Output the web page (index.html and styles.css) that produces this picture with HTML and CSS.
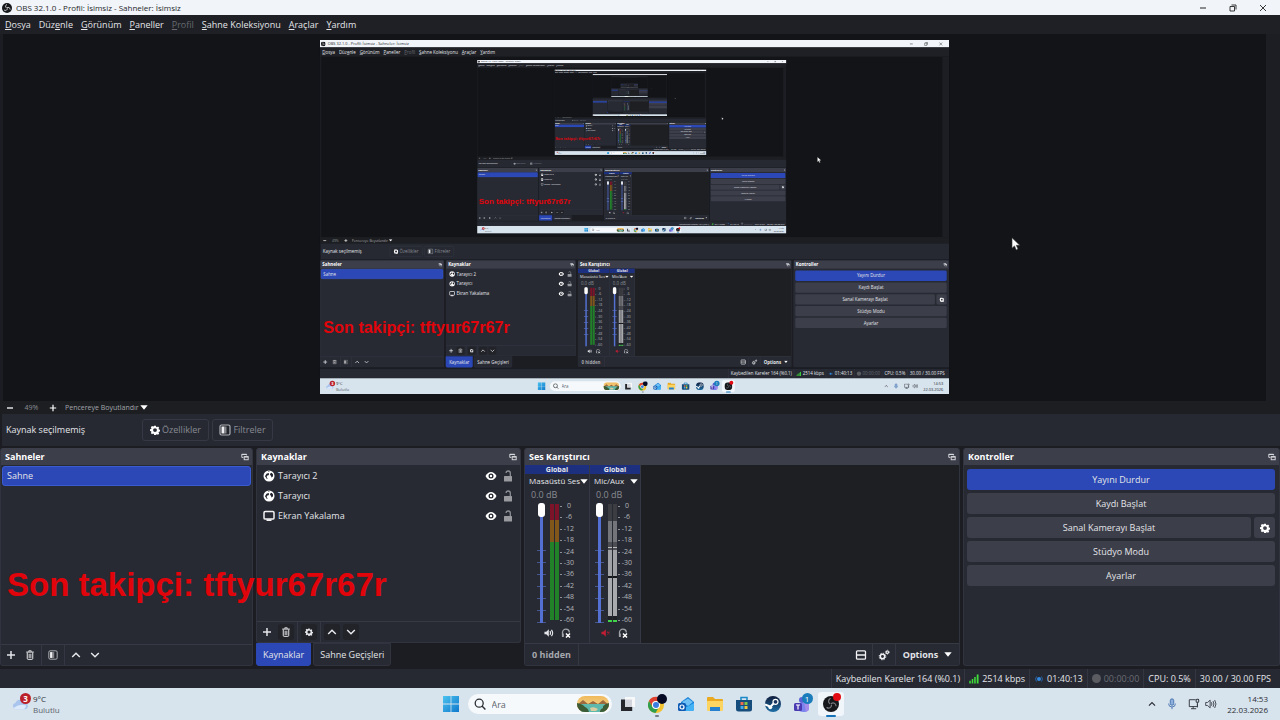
FILE: index.html
```html
<!DOCTYPE html>
<html lang="tr">
<head>
<meta charset="utf-8">
<title>OBS 32.1.0</title>
<link rel="stylesheet" href="styles.css">
</head>
<body>
<svg class="sprite" aria-hidden="true">
  <defs>
    <linearGradient id="g-win" x1="0" y1="0" x2="1" y2="1"><stop offset="0" stop-color="#4cc3f0"/><stop offset="1" stop-color="#0f78cc"/></linearGradient>
    <linearGradient id="g-sky" x1="0" y1="0" x2="0" y2="1"><stop offset="0" stop-color="#f0b95a"/><stop offset="1" stop-color="#f7dfa0"/></linearGradient>
    <linearGradient id="g-steam" x1="0" y1="0" x2="0" y2="1"><stop offset="0" stop-color="#101d3c"/><stop offset="1" stop-color="#1d6ea5"/></linearGradient>
    <clipPath id="c-pill"><rect width="32" height="16" rx="8"/></clipPath>
  </defs>
  <symbol id="i-obs" viewBox="0 0 16 16"><circle cx="8" cy="8" r="8" fill="#16171a"/><g fill="none" stroke="#d8dade" stroke-width="1.5" stroke-linecap="round"><path d="M7.2 2.6c-2 1.2-2.2 3.8-.4 5"/><path d="M13 9.8c-.2-2.4-2.6-3.6-4.6-2.4"/><path d="M4 11.6c2.1 1.1 4.400-.1 4.500-2.400"/></g></symbol>
  <symbol id="i-obs-dim" viewBox="0 0 16 16"><circle cx="8" cy="8" r="8" fill="#16171a"/><g fill="none" stroke="#777a80" stroke-width="1.200" stroke-linecap="round"><path d="M7.2 2.6c-2 1.2-2.2 3.8-.4 5"/><path d="M13 9.8c-.2-2.4-2.6-3.6-4.6-2.4"/><path d="M4 11.6c2.1 1.1 4.400-.1 4.500-2.400"/></g></symbol>
  <symbol id="i-popout" viewBox="0 0 10 10"><g fill="none" stroke="#d6d7dc" stroke-width="1.200"><path d="M3 5.500H1V1.600h6V3"/><rect x="4" y="4.600" width="5" height="3.800"/></g><path d="M1 1.200h6v1.300H1zM4 4h5v1.500H4z" fill="#d6d7dc"/></symbol>
  <symbol id="i-gear" viewBox="0 0 16 16"><path fill="currentColor" fill-rule="evenodd" d="M6.600 1h2.800l.4 1.900 1.300.6 1.700-1 1.900 1.900-1 1.700.5 1.200 1.900.5v2.600l-1.900.4-.5 1.300 1 1.700-1.900 1.900-1.700-1-1.300.5L9.400 16H6.600l-.4-1.800-1.300-.5-1.700 1-1.900-1.900 1-1.700-.5-1.300L0 9.400V6.800l1.800-.5.5-1.200-1-1.700 1.900-1.900 1.700 1 1.300-.6zM8 5a3 3 0 1 0 0 6.200A3 3 0 0 0 8 5z"/></symbol>
  <symbol id="i-filter" viewBox="0 0 12 12"><rect x="1" y="1" width="10" height="10" rx="1.500" fill="#24262d" stroke="#aeb0b6" stroke-width="1.200"/><rect x="2.500" y="2.500" width="3" height="7" fill="#f0f0f2"/><rect x="5.500" y="2.500" width="2" height="7" fill="#85878e"/></symbol>
  <symbol id="i-globe" viewBox="0 0 12 12"><circle cx="6" cy="6" r="5.500" fill="#fff"/><path d="M2 6.200l1.500-2.500 2-.8.700 1-.7 1.400-1.600.4-.2 1.500 1 1.300-.8.600zM7.200 3.600l1.600-.9 1.400 2-.5 2-1.300.7-.4-1.600-1-.7zM5 1.300l1.600-.2-.6.900z" fill="#23252e"/></symbol>
  <symbol id="i-screen" viewBox="0 0 12 12"><rect x="1" y="1.500" width="10" height="7.600" rx="1.200" fill="none" stroke="#f2f2f4" stroke-width="1.500"/><path d="M3.500 9.300h5v1.700h-5z" fill="#f2f2f4"/></symbol>
  <symbol id="i-eye" viewBox="0 0 12 10"><path d="M0.500 5C2 2 4 .9 6 .9S10 2 11.500 5C10 8 8 9.100 6 9.100S2 8 .5 5z" fill="#fff"/><circle cx="6" cy="5" r="2.500" fill="#23252e"/><circle cx="6" cy="5" r="1.200" fill="#fff"/></symbol>
  <symbol id="i-lock" viewBox="0 0 10 12"><rect x="1" y="6" width="8" height="5.500" rx=".6" fill="#989a9f"/><path d="M7.300 6V3.200a2.100 2.100 0 0 0-4.200-.2" fill="none" stroke="#8c8e94" stroke-width="1.300"/></symbol>
  <symbol id="i-plus" viewBox="0 0 10 10"><path d="M5 1v8M1 5h8" stroke="currentColor" stroke-width="1.500"/></symbol>
  <symbol id="i-minus" viewBox="0 0 10 10"><path d="M2 5h6" stroke="currentColor" stroke-width="1.300"/></symbol>
  <symbol id="i-trash" viewBox="0 0 10 12"><path d="M.5 2.500h9M3.500 2V1h3v1M1.700 3v7.200q0 1 1 1h4.600q1 0 1-1V3" fill="none" stroke="#e8e8ea" stroke-width="1.200"/><path d="M3.200 4.500h3.600v5H3.200z" fill="#9a9ba0"/></symbol>
  <symbol id="i-up" viewBox="0 0 10 10"><path d="M1.200 7L5 3.200 8.800 7" fill="none" stroke="currentColor" stroke-width="1.500"/></symbol>
  <symbol id="i-down" viewBox="0 0 10 10"><path d="M1.200 3L5 6.800 8.800 3" fill="none" stroke="currentColor" stroke-width="1.500"/></symbol>
  <symbol id="i-caret" viewBox="0 0 8 5"><path d="M.3.300h7.400L4 4.800z" fill="#fff"/></symbol>
  <symbol id="i-speaker" viewBox="0 0 11 10"><path d="M.5 3.500h2L5.300 1v8L2.500 6.500h-2z" fill="currentColor"/><path d="M6.500 3q1.300 2 0 4M8.200 1.500q2.600 3.500 0 7" fill="none" stroke="currentColor" stroke-width="1.300"/></symbol>
  <symbol id="i-muted" viewBox="0 0 11 10"><path d="M.5 3.500h2L5.300 1v8L2.500 6.500h-2z" fill="currentColor"/><path d="M6.500 3.500l3 3M9.500 3.500l-3 3" stroke="currentColor" stroke-width="1.200" opacity=".7"/></symbol>
  <symbol id="i-phones" viewBox="0 0 10 10"><path d="M1.500 8.500V4.500a3.400 3.400 0 0 1 6.800 0" fill="none" stroke="#a2a3a8" stroke-width="1.300"/><path d="M1 5.500h1.800v3.500H1z" fill="#a2a3a8"/><path d="M5 5.500l4 4M9 5.500l-4 4" stroke="#fff" stroke-width="1.500"/></symbol>
  <symbol id="i-layout" viewBox="0 0 12 10"><rect x="1.500" y=".8" width="9" height="8.400" rx="1" fill="none" stroke="#f2f2f4" stroke-width="1.300"/><path d="M1.500 5h9" stroke="#f2f2f4" stroke-width="1.300"/></symbol>
  <symbol id="i-gears" viewBox="0 0 12 12"><g fill="none" stroke="#f2f2f4"><circle cx="4.500" cy="7.500" r="2.200" stroke-width="1.500"/><circle cx="4.500" cy="7.500" r="3.300" stroke-width="1" stroke-dasharray="1.300 1.292"/><circle cx="9.300" cy="3.200" r="1.200" stroke-width="1.200"/><circle cx="9.300" cy="3.200" r="2" stroke-width=".7" stroke-dasharray="1.050 1.044"/></g></symbol>
  <symbol id="i-bars" viewBox="0 0 11 10"><path d="M.3 7h1.700v3H.3zM3 5h1.700v5H3zM5.700 2.800h1.700V10H5.700zM8.500 0h2v10h-2z" fill="#3fdc3a"/></symbol>
  <symbol id="i-live" viewBox="0 0 12 10"><circle cx="6" cy="5" r="2.400" fill="#3388e0"/><path d="M3 2Q.8 5 3 8M9 2q2.200 3 0 6" fill="none" stroke="#2763a8" stroke-width="1.200"/></symbol>
  <symbol id="i-cloud" viewBox="0 0 18 12"><path d="M4 11.500a3.300 3.300 0 0 1-.4-6.500A5 5 0 0 1 13 4.600a3.500 3.500 0 0 1 1 6.900z" fill="#a9c5ee"/><path d="M2 10q6-5 13-2.500-1 4-3 4H4q-2 0-2-1.500z" fill="#dbe9fb"/></symbol>
  <symbol id="i-windows" viewBox="0 0 16 16"><path d="M0 0h7.600v7.600H0zM8.400 0H16v7.600H8.400zM0 8.400h7.600V16H0zM8.400 8.400H16V16H8.400z" fill="url(#g-win)"/></symbol>
  <symbol id="i-search" viewBox="0 0 12 12"><circle cx="5.200" cy="5.200" r="4" fill="none" stroke="#2a2d33" stroke-width="1.300"/><path d="M8 8l3.400 3.400" stroke="#2a2d33" stroke-width="1.400"/></symbol>
  <symbol id="i-scene" viewBox="0 0 32 16"><g clip-path="url(#c-pill)"><path d="M0 0h32v16H0z" fill="url(#g-sky)"/><path d="M0 9l6-5 5 4 5-3 5 3 5-4 6 5v7H0z" fill="#9c6a3e"/><path d="M4 8h24v8H4z" fill="#5fb8ac"/><path d="M0 7q6 1 8 4 3 1 4 5H0zM32 7q-7 2-6 5-3 1-3 4h9z" fill="#3c5c35"/><path d="M13 12q4-2 8 1l-2 2h-5z" fill="#d8cda0"/></g></symbol>
  <symbol id="i-task" viewBox="0 0 16 16"><path d="M5 1h10v10H5z" fill="#f7f8fa"/><path d="M1 3.500h4v7.300h7.200V15H1z" fill="#24262a"/><path d="M5 3.500h7v7.300H5z" fill="#d2d6dc"/></symbol>
  <symbol id="i-chrome" viewBox="0 0 20 20"><circle cx="9" cy="11" r="8" fill="#f2c230"/><path d="M2 7a8 8 0 0 1 14 0H9a4 4 0 0 0-3.500 6z" fill="#df4133"/><path d="M2 7a8 8 0 0 0 6.500 12l3.600-6.200A4 4 0 0 1 5.500 13z" fill="#2f9d4e"/><circle cx="9" cy="11" r="4" fill="#fff"/><circle cx="9" cy="11" r="3" fill="#3b7de0"/><circle cx="15" cy="5" r="5" fill="#060a24"/></symbol>
  <symbol id="i-outlook" viewBox="0 0 16 16"><path d="M3 6l7-5 6 5v7q0 2-2 2H5q-2 0-2-2z" fill="#1680d8"/><path d="M4 6l6-3.500L15 6l-5 4z" fill="#6fc0f5"/><path d="M3 14l13-7v6q0 2-2 2H5z" fill="#43b2f4"/><rect y="7" width="8" height="8" rx="1.500" fill="#105cb4"/><circle cx="4" cy="11" r="2" fill="none" stroke="#fff" stroke-width="1.200"/></symbol>
  <symbol id="i-folder" viewBox="0 0 16 16"><path d="M0 2q0-1 1-1h5l2 2h7q1 0 1 1v10H0z" fill="#e9a920"/><path d="M0 5h16v9q0 1-1 1H1q-1 0-1-1z" fill="#fcd462"/><path d="M3 11h10v4H3z" fill="#2581ce"/></symbol>
  <symbol id="i-store" viewBox="0 0 16 16"><path d="M5 4V1.500h6V4" fill="none" stroke="#1989c7" stroke-width="1.500"/><path d="M0 4h16v9q0 2.500-2.500 2.500h-11Q0 15.500 0 13z" fill="#154d7d"/><path d="M4.500 6h3v3h-3z" fill="#ed6b4e"/><path d="M8.500 6h3v3h-3z" fill="#80c44a"/><path d="M4.500 10h3v3h-3z" fill="#43abe8"/><path d="M8.500 10h3v3h-3z" fill="#f2c83e"/></symbol>
  <symbol id="i-steam" viewBox="0 0 16 16"><circle cx="8" cy="8" r="8" fill="url(#g-steam)"/><path d="M0 8.500l5.500 2.200L9 7" fill="none" stroke="#fff" stroke-width="2"/><circle cx="10.500" cy="5.800" r="2.500" fill="#17345c" stroke="#fff" stroke-width="1.200"/><circle cx="5.300" cy="11.300" r="1.900" fill="#fff"/></symbol>
  <symbol id="i-teams" viewBox="0 0 16 16"><circle cx="8" cy="4" r="3" fill="#5b62d6"/><path d="M3 7h12v5q0 4-5 4-6 0-7-4z" fill="#7b83ee"/><path d="M10 7h5v5q0 3-3 3.500z" fill="#a58bea"/><rect y="7" width="8" height="8" rx="1.500" fill="#4a3bb2"/><path d="M2 9h4M4 9v4.500" stroke="#fff" stroke-width="1.200"/></symbol>
  <symbol id="i-mic" viewBox="0 0 10 14"><rect x="3" y="1" width="4" height="7.500" rx="2" fill="#8eb0dc" stroke="#3f6cab"/><path d="M1 6.500q0 4 4 4t4-4M5 10.500V13" fill="none" stroke="#3f6cab"/></symbol>
  <symbol id="i-net" viewBox="0 0 14 14"><path d="M9 2H1.500v8h9.500V6.500M3.500 12.500h6M6 10v2.500" fill="none" stroke="#33373f" stroke-width="1.100"/><rect x="9.500" y="1.500" width="3" height="3.500" rx="1" fill="none" stroke="#33373f" stroke-width="1.200"/><path d="M11 5v6" stroke="#33373f"/></symbol>
  <symbol id="i-sound" viewBox="0 0 14 12"><path d="M.8 4.200H3L6 1.500v9L3 7.800H.8z" fill="none" stroke="#33373f"/><path d="M7.500 4q1.200 2 0 4M9.400 2.600q2 3.400 0 6.800M11.300 1.300q3 4.700 0 9.400" fill="none" stroke="#33373f"/></symbol>
  <symbol id="i-cursor" viewBox="0 0 10 14"><path d="M1 .800v10.400l2.500-2.300 1.700 4 1.800-.8-1.700-3.800h3.500z" fill="#fff" stroke="#333" stroke-width=".6"/></symbol>
</svg>

<div class="desktop">
  <header class="titlebar">
    <svg class="s10"><use href="#i-obs"/></svg>
    <span class="title">OBS 32.1.0 - Profil: İsimsiz - Sahneler: İsimsiz</span>
    <button class="winbtn" aria-label="Simge durumuna küçült"><svg class="s8" viewBox="0 0 8 8"><path d="M1 4h6" stroke="#222"/></svg></button>
    <button class="winbtn" aria-label="Önceki boyut"><svg class="s8" viewBox="0 0 8 8"><path d="M1 2.500h4.500V7H1zM2.500 1H7v4.500" fill="none" stroke="#222" stroke-width=".9"/></svg></button>
    <button class="winbtn" aria-label="Kapat"><svg class="s8" viewBox="0 0 8 8"><path d="M1 1l6 6M7 1L1 7" stroke="#222" stroke-width=".9"/></svg></button>
  </header>

  <nav class="menubar">
    <button><u>D</u>osya</button><button>Düz<u>e</u>nle</button><button><u>G</u>örünüm</button><button><u>P</u>aneller</button><button disabled><u>P</u>rofil</button><button><u>S</u>ahne Koleksiyonu</button><button><u>A</u>raçlar</button><button><u>Y</u>ardım</button>
  </nav>

  <main class="stage">
    <svg class="capture" viewBox="0 0 1280 720" role="img" aria-label="Önizleme"></svg>
  </main>

  <div class="zoombar">
    <button aria-label="Uzaklaştır"><svg class="s10"><use href="#i-minus"/></svg></button>
    <span class="percent">49%</span>
    <button aria-label="Yakınlaştır"><svg class="s8"><use href="#i-plus"/></svg></button>
    <div class="fit"><select aria-label="Önizleme ölçeği"><option>Pencereye Boyutlandır</option></select><svg class="caret"><use href="#i-caret"/></svg></div>
  </div>

  <div class="context">
    <span class="context-label">Kaynak seçilmemiş</span>
    <button class="ghost" disabled><svg class="s10"><use href="#i-gear"/></svg>Özellikler</button>
    <button class="ghost" disabled><svg class="s12"><use href="#i-filter"/></svg>Filtreler</button>
  </div>

  <div class="docks">
    <section class="dock">
      <h2>Sahneler<button aria-label="Paneli ayır"><svg class="s8"><use href="#i-popout"/></svg></button></h2>
      <ul class="scenes"><li>Sahne</li></ul>
      <div class="tools">
        <button aria-label="Ekle"><svg class="s10"><use href="#i-plus"/></svg></button>
        <button aria-label="Sil"><svg class="s10"><use href="#i-trash"/></svg></button>
        <i class="rule"></i>
        <button aria-label="Filtreler"><svg class="s10"><use href="#i-filter"/></svg></button>
        <i class="rule"></i>
        <button aria-label="Yukarı"><svg class="s10"><use href="#i-up"/></svg></button>
        <button aria-label="Aşağı"><svg class="s10"><use href="#i-down"/></svg></button>
      </div>
    </section>

    <div class="stack">
      <section class="dock">
        <h2>Kaynaklar<button aria-label="Paneli ayır"><svg class="s8"><use href="#i-popout"/></svg></button></h2>
        <ul class="sources">
          <li><svg class="s12"><use href="#i-globe"/></svg><span>Tarayıcı 2</span><button aria-label="Görünürlük"><svg class="s12"><use href="#i-eye"/></svg></button><button aria-label="Kilit"><svg class="s12"><use href="#i-lock"/></svg></button></li>
          <li><svg class="s12"><use href="#i-globe"/></svg><span>Tarayıcı</span><button aria-label="Görünürlük"><svg class="s12"><use href="#i-eye"/></svg></button><button aria-label="Kilit"><svg class="s12"><use href="#i-lock"/></svg></button></li>
          <li><svg class="s12"><use href="#i-screen"/></svg><span>Ekran Yakalama</span><button aria-label="Görünürlük"><svg class="s12"><use href="#i-eye"/></svg></button><button aria-label="Kilit"><svg class="s12"><use href="#i-lock"/></svg></button></li>
        </ul>
        <div class="tools">
          <button aria-label="Ekle"><svg class="s10"><use href="#i-plus"/></svg></button>
          <button class="sunk" aria-label="Sil"><svg class="s10"><use href="#i-trash"/></svg></button>
          <i class="rule"></i>
          <button class="sunk" aria-label="Özellikler"><svg class="s8"><use href="#i-gear"/></svg></button>
          <i class="rule"></i>
          <button class="sunk" aria-label="Yukarı"><svg class="s10"><use href="#i-up"/></svg></button>
          <button class="sunk" aria-label="Aşağı"><svg class="s10"><use href="#i-down"/></svg></button>
        </div>
      </section>
      <div class="tabs"><button class="active">Kaynaklar</button><button>Sahne Geçişleri</button></div>
    </div>

    <section class="dock mixer">
      <h2>Ses Karıştırıcı<button aria-label="Paneli ayır"><svg class="s8"><use href="#i-popout"/></svg></button></h2>
      <div class="strips">
        <div class="strip wide">
          <div class="tag">Global</div>
          <button class="channel">Masaüstü Ses<svg class="caret"><use href="#i-caret"/></svg></button>
          <div class="level">0.0 dB</div>
          <div class="fader">
            <input type="range" min="0" max="100" value="100" aria-label="Masaüstü Ses düzeyi">
            <div class="meter colour"><i></i><i></i></div>
            <ol><li>0</li><li>-6</li><li>-12</li><li>-18</li><li>-24</li><li>-30</li><li>-36</li><li>-42</li><li>-48</li><li>-54</li><li>-60</li></ol>
          </div>
          <div class="switches"><button aria-label="Sustur"><svg class="s10"><use href="#i-speaker"/></svg></button><button aria-label="Dinle"><svg class="s10"><use href="#i-phones"/></svg></button></div>
        </div>
        <div class="strip">
          <div class="tag">Global</div>
          <button class="channel">Mic/Aux<svg class="caret"><use href="#i-caret"/></svg></button>
          <div class="level">0.0 dB</div>
          <div class="fader">
            <input type="range" min="0" max="100" value="100" aria-label="Mic/Aux düzeyi">
            <div class="meter grey"><i></i><i></i></div>
            <ol><li>0</li><li>-6</li><li>-12</li><li>-18</li><li>-24</li><li>-30</li><li>-36</li><li>-42</li><li>-48</li><li>-54</li><li>-60</li></ol>
          </div>
          <div class="switches"><button class="muted" aria-label="Sesi aç"><svg class="s10"><use href="#i-muted"/></svg></button><button aria-label="Dinle"><svg class="s10"><use href="#i-phones"/></svg></button></div>
        </div>
      </div>
      <div class="mixer-foot">
        <span class="hidden-count">0 hidden</span>
        <button aria-label="Düzen"><svg class="s12"><use href="#i-layout"/></svg></button>
        <button aria-label="Gelişmiş ses"><svg class="s12"><use href="#i-gears"/></svg></button>
        <button class="options">Options<svg class="caret"><use href="#i-caret"/></svg></button>
      </div>
    </section>

    <section class="dock">
      <h2>Kontroller<button aria-label="Paneli ayır"><svg class="s8"><use href="#i-popout"/></svg></button></h2>
      <div class="controls">
        <button class="active">Yayını Durdur</button>
        <button>Kaydı Başlat</button>
        <div class="pair"><button>Sanal Kamerayı Başlat</button><button aria-label="Sanal kamera ayarları"><svg class="s10"><use href="#i-gear"/></svg></button></div>
        <button>Stüdyo Modu</button>
        <button>Ayarlar</button>
      </div>
    </section>
  </div>

  <footer class="status">
    <span>Kaybedilen Kareler 164 (%0.1)</span>
    <span><svg class="s10"><use href="#i-bars"/></svg>2514 kbps</span>
    <span><svg class="s10"><use href="#i-live"/></svg>01:40:13</span>
    <span class="off"><i class="dot"></i>00:00:00</span>
    <span>CPU: 0.5%</span>
    <span>30.00 / 30.00 FPS</span>
  </footer>

  <div class="taskbar">
    <div class="weather"><div class="cloud"><svg><use href="#i-cloud"/></svg><b>3</b></div><div><div>9°C</div><div class="soft">Bulutlu</div></div></div>
    <div class="apps">
      <button class="start" aria-label="Başlat"><svg class="s16"><use href="#i-windows"/></svg></button>
      <label class="search"><svg class="s12"><use href="#i-search"/></svg><input type="text" placeholder="Ara" aria-label="Ara"><svg class="scene"><use href="#i-scene"/></svg></label>
      <button class="app" aria-label="Görev görünümü"><svg class="s16"><use href="#i-task"/></svg></button>
      <button class="app open" aria-label="Chrome"><svg class="s20"><use href="#i-chrome"/></svg></button>
      <button class="app" aria-label="Outlook"><svg class="s16"><use href="#i-outlook"/></svg></button>
      <button class="app" aria-label="Dosya Gezgini"><svg class="s16"><use href="#i-folder"/></svg></button>
      <button class="app" aria-label="Store"><svg class="s16"><use href="#i-store"/></svg></button>
      <button class="app" aria-label="Steam"><svg class="s16"><use href="#i-steam"/></svg></button>
      <button class="app" aria-label="Teams"><svg class="s16"><use href="#i-teams"/></svg><b class="badge">1</b></button>
      <button class="app open current" aria-label="OBS"><svg class="s16"><use href="#i-obs-dim"/></svg><b class="badge rec"></b></button>
    </div>
    <div class="tray">
      <svg class="s8"><use href="#i-up"/></svg>
      <svg class="s12"><use href="#i-mic"/></svg>
      <div class="net"><svg class="s12"><use href="#i-net"/></svg><svg class="s12"><use href="#i-sound"/></svg></div>
      <div class="clock"><div>14:53</div><div>22.03.2026</div></div>
    </div>
  </div>

  <div class="overlay">Son takipçi: tftyur67r67r</div>
  <svg class="cursor"><use href="#i-cursor"/></svg>
</div>
<script src="script.js"></script>
</body>
</html>
```
FILE: styles.css
```css
* { box-sizing: border-box; }
html, body { height: 100%; margin: 0; }
body { background: #1b1d23; }
button, input, select { font: inherit; color: inherit; border: 0; background: none; padding: 0; margin: 0; }
ul, ol { list-style: none; margin: 0; padding: 0; }
svg { display: block; flex: none; }
.sprite { position: absolute; width: 0; height: 0; }
.s8 { width: 8px; height: 8px; }
.s10 { width: 10px; height: 10px; }
.s12 { width: 12px; height: 12px; }
.s16 { width: 16px; height: 16px; }
.s20 { width: 20px; height: 20px; }
.caret { width: 8px; height: 5px; }

.desktop {
  position: relative;
  display: flex;
  flex-direction: column;
  height: 100%;
  overflow: hidden;
  background: #1b1d23;
  color: #e4e5e9;
  font: 9px/14px "Open Sans", "Noto Sans", sans-serif;
}

.titlebar { display: flex; align-items: center; height: 15px; padding: 0 2px; background: #f1f5f9; color: #25272b; font-size: 8px; }
.title { flex: 1; margin-left: 4px; }
.winbtn { display: grid; place-items: center; width: 30px; height: 15px; }

.menubar { display: flex; gap: 8px; height: 19px; padding: 0 5px; background: #1e2025; align-items: center; }
.menubar button:disabled { color: #686a70; }
.menubar u { text-underline-offset: 1px; }

.stage { flex: 1; min-height: 0; margin-left: 3px; padding: 6px 0 7px; background: #131418; border-right: 14px solid #1d1e23; }
.capture { width: 100%; height: 100%; }

.zoombar { display: flex; align-items: center; height: 13px; padding-left: 4px; background: #1c1e22; font-size: 7px; color: #fff; }
.zoombar button { display: grid; place-items: center; width: 12px; }
.percent { width: 31px; text-align: center; color: #8b8d92; }
.fit { display: flex; align-items: center; margin-left: 6px; }
.fit select { appearance: none; width: 75px; color: #a2a4a9; line-height: 12px; }

.context { display: flex; align-items: center; height: 32px; margin: 0 0 2px 2px; padding-left: 4px; background: #262932; }
.context-label { width: 136px; }
.ghost { display: flex; align-items: center; justify-content: center; gap: 2px; height: 22px; width: 67px; border: 1px solid #363943; border-radius: 3px; color: #888a92; }
.ghost + .ghost { width: 61px; margin-left: 3px; }
.ghost svg { color: #fff; }

.docks { display: grid; grid-template-columns: 253fr 265fr 436fr 317fr; column-gap: 3px; height: 218px; }
.dock { display: flex; flex-direction: column; min-width: 0; min-height: 0; flex: 1; background: #272a33; border: 1px solid #31343e; border-top: 0; border-radius: 3px; overflow: hidden; }
.stack { display: flex; flex-direction: column; min-width: 0; }
h2 { display: flex; justify-content: space-between; align-items: center; flex: none; height: 17px; margin: 0; padding: 0 3px 0 4px; background: #3c3e4a; color: #fff; font-size: 9px; font-weight: 700; }
h2 button { display: block; }
.scenes { flex: 1; padding: 1px; }
.scenes li { height: 20px; padding: 2px 4px; background: #2b48b6; border: 1px solid #3b5bd0; border-radius: 3px; line-height: 14px; }
.sources { flex: 1; padding: 1px 6px 0; }
.sources li { display: flex; align-items: center; height: 20px; }
.sources span { flex: 1; margin-left: 3px; }
.sources button + button { margin: 0 0 0 5px; }
.tools { display: flex; align-items: center; gap: 3px; height: 21px; padding-left: 2px; border-top: 1px solid #373a45; }
.tools button { display: grid; place-items: center; width: 16px; height: 16px; border-radius: 3px; }
.tools .sunk { background: #212329; }
.rule { width: 1px; height: 20px; background: #353843; }
.tabs { display: flex; gap: 2px; height: 23px; flex: none; }
.tabs button { padding: 0 6px; background: #272a33; border: 1px solid #31343e; border-radius: 0 0 3px 3px; }
.tabs .active { background: #2b48b6; border-color: #2b48b6; }

.mixer { background: #1e1f22; }
.strips { display: flex; flex: 1; min-height: 0; }
.strip { display: flex; flex-direction: column; width: 51px; background: #272a33; border-right: 1px solid #363945; }
.strip.wide { width: 65px; }
.tag { height: 9px; background: #1d3080; font-size: 7px; font-weight: 700; line-height: 9px; text-align: center; }
.channel { display: flex; align-items: center; justify-content: space-between; height: 14px; padding: 0 2px 0 4px; font-size: 8px; white-space: nowrap; }
.level { height: 14px; padding-left: 6px; color: #898b92; line-height: 14px; }
.fader { display: flex; height: 122px; padding: 1px 0 1px 5px; }
.wide .fader { padding-left: 12px; }
.fader input { appearance: none; writing-mode: vertical-lr; direction: rtl; width: 9px; height: 120px; background: repeating-linear-gradient(#0000 0 11px, #46578f 11px 12px) 0 36px / 9px 84px no-repeat; }
.fader input::-webkit-slider-runnable-track { width: 3px; height: 120px; margin: 0 3px; background: #5470d2; }
.fader input::-webkit-slider-thumb { appearance: none; width: 7px; height: 14px; margin-left: -2px; background: #fff; border-radius: 3px; }
.meter { display: flex; gap: 1px; width: 9px; height: 116px; margin: 1px 2px 0 4px; }
.meter i { flex: 1; }
.colour i { background: linear-gradient(#7c1328 0 16px, #80561a 16px 38px, #218129 38px); }
.grey i { background: linear-gradient(#3c3d42 0 17px, #74757a 17px 38px, #4d4e54 38px 43px, #bbb 43px 44px, #4d4e54 44px 46px, #a0a1a5 46px 72px, #15161a 72px 74px, #a9aaad 74px 112px, #1f2126 112px); }
.grey i { height: 118px; border-bottom: 2px solid #41d44a; }
.fader ol { display: flex; flex-direction: column; justify-content: space-between; height: 122px; width: 16px; margin-top: -1px; color: #b3b4b8; font-size: 7px; line-height: 8px; text-align: center; }
.fader ol li { position: relative; }
.fader ol li::before { content: ""; position: absolute; left: -1px; top: 4px; width: 2px; height: 1px; background: #8f9197; }
.switches { display: flex; gap: 7px; justify-content: center; align-items: center; height: 18px; padding-right: 2px; }
.wide .switches { padding: 0; }
.muted { color: #c31d34; }
.mixer-foot { display: flex; height: 22px; background: #272a33; border-top: 1px solid #373a45; font-weight: 700; }
.mixer-foot > * { display: flex; align-items: center; justify-content: center; width: 23px; border-right: 1px solid #353843; }
.mixer-foot .hidden-count { width: 54px; margin-right: auto; color: #a6a8ae; }
.mixer-foot .options { gap: 6px; width: 63px; border: 0; }

.controls { display: flex; flex-direction: column; gap: 3px; padding: 4px 4px 0 3px; }
.controls button { flex: 1; height: 21px; min-height: 21px; background: #3c3e4a; border-radius: 3px; }
.controls .active { background: #2b48b6; }
.pair { display: flex; gap: 3px; }
.controls .pair button:last-child { display: grid; place-items: center; flex: 0 0 21px; color: #fff; }

.status { display: flex; justify-content: flex-end; height: 19px; margin-top: 3px; padding-right: 5px; background: #262932; }
.status span { display: flex; align-items: center; gap: 3px; padding: 0 4px; border-left: 1px solid #343742; }
.status .off { color: #6a6c73; }
.dot { width: 9px; height: 9px; border-radius: 50%; background: #5a5c62; }

.taskbar { display: grid; grid-template-columns: 1fr auto 1fr; align-items: center; height: 32px; background: #d7e3ed; color: #2a2e35; font-size: 8px; line-height: 11px; }
.weather { display: flex; gap: 4px; padding-left: 12px; }
.cloud { position: relative; width: 17px; }
.cloud svg { width: 17px; height: 12px; margin-top: 5px; }
.cloud b { position: absolute; left: 8px; top: 0; width: 11px; height: 11px; border-radius: 50%; background: #b9202a; color: #fff; text-align: center; }
.soft { color: #5d646e; }
.apps { display: flex; align-items: center; gap: 3px; padding-left: 6px; }
.start { margin-right: 6px; }
.search { display: flex; align-items: center; width: 144px; height: 20px; padding: 0 3px 0 6px; background: #f6f9fb; border-radius: 10px; }
.search input { flex: 1; min-width: 0; margin-left: 6px; font-size: 9px; outline: 0; }
.search input::placeholder { color: #5d646e; opacity: 1; }
.scene { width: 32px; height: 16px; }
.app { position: relative; display: grid; place-items: center; width: 26px; height: 24px; border-radius: 3px; }
.open::after { content: ""; position: absolute; bottom: -1px; left: 11px; width: 4px; height: 2px; border-radius: 1px; background: #757d86; }
.current { background: #f1f6fa; }
.current::after { left: 8px; width: 10px; background: #1473b8; }
.badge { position: absolute; left: 13px; top: 1px; width: 11px; height: 11px; border-radius: 50%; background: #1a7cba; color: #fff; font-weight: 400; line-height: 11px; }
.rec { left: 15px; width: 8px; height: 8px; background: #e30b13; }
.tray { display: flex; justify-content: flex-end; align-items: center; gap: 10px; padding-right: 12px; }
.net { display: flex; gap: 5px; }
.clock { text-align: right; }

.overlay { position: absolute; left: 7px; bottom: 116px; color: #e2040b; font: 700 33px/38px "Liberation Sans", sans-serif; pointer-events: none; }
.cursor { position: absolute; left: 79%; top: 237px; width: 10px; height: 14px; pointer-events: none; }
```
FILE: script.js
```js
// The display capture shows the desktop itself, so each preview holds a smaller copy.
const DEPTH = 6;
// Past this level the labels are smaller than a pixel, and only the shapes are drawn.
const LAST_LABELLED = 3;
const SVG_NS = 'http://www.w3.org/2000/svg';
const desktop = document.querySelector('.desktop');
const blank = desktop.cloneNode(true);

function stripLabels(root) {
  const walker = document.createTreeWalker(root, NodeFilter.SHOW_TEXT);
  const labels = [];
  while (walker.nextNode()) labels.push(walker.currentNode);
  labels.forEach((label) => label.remove());
  root.querySelectorAll('[placeholder]').forEach((el) => el.removeAttribute('placeholder'));
}

let target = desktop;
for (let level = 1; level <= DEPTH; level++) {
  const frame = document.createElementNS(SVG_NS, 'foreignObject');
  frame.setAttribute('width', 1280);
  frame.setAttribute('height', 720);
  const copy = blank.cloneNode(true);
  if (level > LAST_LABELLED) stripLabels(copy);
  copy.inert = true;
  copy.setAttribute('aria-hidden', 'true');
  frame.append(copy);
  target.querySelector('.capture').append(frame);
  target = copy;
}
```
